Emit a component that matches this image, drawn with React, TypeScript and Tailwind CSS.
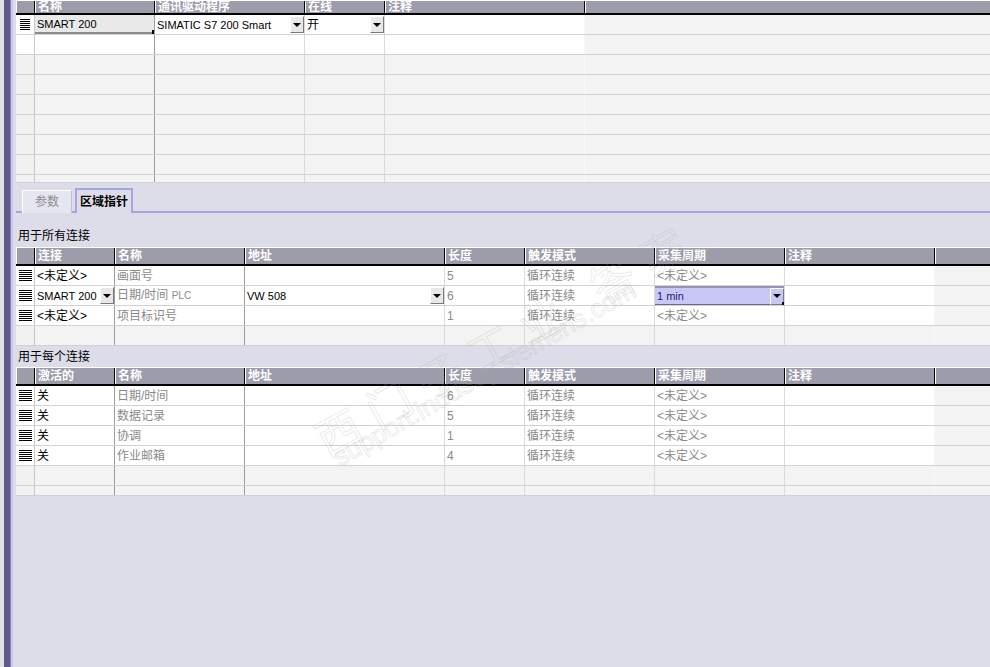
import React from 'react';

type Col = { w: string; title: string; line: string };

const font = "font-['Liberation_Sans','Noto_Sans_CJK_SC',sans-serif]";

function RowIcon({ w }: { w: string }) {
  return (
    <div className={`flex flex-col gap-px ${w}`}>
      {[0, 1, 2, 3, 4, 5].map((i) => (
        <div key={i} className="h-px bg-black" />
      ))}
    </div>
  );
}

function DropBtn({ lav }: { lav?: boolean }) {
  return (
    <div
      className={`w-[14px] h-[17px] shrink-0 flex items-center justify-center border-t border-l border-t-white border-l-white border-b border-r border-b-[#7a7a7a] border-r-[#7a7a7a] ${
        lav ? 'bg-[#c8c8f6]' : 'bg-[#e8e8e8]'
      }`}
    >
      <div className="w-0 h-0 border-l-[4px] border-r-[4px] border-t-[4px] border-l-transparent border-r-transparent border-t-black" />
    </div>
  );
}

function Header({ cols, h, iconW }: { cols: Col[]; h: string; iconW: string }) {
  return (
    <div className={`flex ${h} bg-[#9c9cab] border-t border-t-white border-b-2 border-b-black`}>
      <div className={`${iconW} shrink-0 border-l border-l-white border-r border-r-black`} />
      {cols.map((c) => (
        <div
          key={c.title}
          className={`${c.w} shrink-0 border-l border-l-white border-r border-r-black pl-[2px] text-white font-bold text-[12px] leading-[14px] flex items-center`}
        >
          {c.title}
        </div>
      ))}
      <div className="flex-1 border-l border-l-white" />
    </div>
  );
}

type Row = { cells: React.ReactNode[]; filled: boolean; noIcon?: boolean; h?: string };

function Grid({ cols, rows, iconW, icon }: { cols: Col[]; rows: Row[]; iconW: string; icon: string }) {
  return (
    <div>
      {rows.map((r, i) => (
        <div key={i} className={`flex ${r.h ?? 'h-[20px]'} border-b border-b-[#d2d2d2]`}>
          <div
            className={`${iconW} shrink-0 border-r border-r-[#c8c8c8] flex items-center justify-center ${
              r.filled ? 'bg-white' : 'bg-[#f1f1f1]'
            }`}
          >
            {r.filled && !r.noIcon && <RowIcon w={icon} />}
          </div>
          {cols.map((c, j) => (
            <div
              key={j}
              className={`${c.w} shrink-0 border-r ${c.line} ${r.filled ? 'bg-white' : 'bg-[#f3f3f3]'} flex items-center text-[12px] leading-[14px] overflow-hidden`}
            >
              {r.cells[j]}
            </div>
          ))}
          <div className="flex-1 bg-[#f3f3f3]" />
        </div>
      ))}
    </div>
  );
}

const Gray = ({ children }: { children: React.ReactNode }) => (
  <span className="pl-[2px] text-[#8a8a8a]">{children}</span>
);
const Black = ({ children }: { children: React.ReactNode }) => (
  <span className="pl-[2px] text-black">{children}</span>
);

const topCols: Col[] = [
  { w: 'w-[120px]', title: '名称', line: 'border-r-[#9c9c9c]' },
  { w: 'w-[150px]', title: '通讯驱动程序', line: 'border-r-[#dadada]' },
  { w: 'w-[80px]', title: '在线', line: 'border-r-[#dadada]' },
  { w: 'w-[200px]', title: '注释', line: 'border-r-[#f8f8f8]' },
];

function areaCols(first: string): Col[] {
  return [
    { w: 'w-[80px]', title: first, line: 'border-r-[#9c9c9c]' },
    { w: 'w-[130px]', title: '名称', line: 'border-r-[#9c9c9c]' },
    { w: 'w-[200px]', title: '地址', line: 'border-r-[#dadada]' },
    { w: 'w-[80px]', title: '长度', line: 'border-r-[#dadada]' },
    { w: 'w-[130px]', title: '触发模式', line: 'border-r-[#dadada]' },
    { w: 'w-[130px]', title: '采集周期', line: 'border-r-[#dadada]' },
    { w: 'w-[150px]', title: '注释', line: 'border-r-[#f8f8f8]' },
  ];
}

const empty = (n: number): Row[] => Array.from({ length: n }, () => ({ cells: [], filled: false }));

export default function App() {
  const topRows: Row[] = [
    {
      filled: true,
      cells: [
        <div className="relative w-full h-full bg-[#e9e9e9] border-b-2 border-b-[#8c8c8c] flex items-center pl-[2px] font-['Liberation_Sans',sans-serif] text-[11px]">
          SMART 200
          <div className="absolute right-[-2px] bottom-[-2px] w-[4px] h-[4px] bg-black" />
        </div>,
        <div className="w-full flex items-center justify-between pl-[2px] font-['Liberation_Sans',sans-serif] text-[11px]">
          SIMATIC S7 200 Smart
          <DropBtn />
        </div>,
        <div className="w-full flex items-center justify-between pl-[2px]">
          开
          <DropBtn />
        </div>,
        null,
      ],
    },
    { filled: true, noIcon: true, cells: [] },
    ...empty(6),
    { filled: false, cells: [], h: 'h-[8px]' },
  ];

  const allRows: Row[] = [
    {
      filled: true,
      cells: [<Black>&lt;未定义&gt;</Black>, <Gray>画面号</Gray>, null, <Gray>5</Gray>, <Gray>循环连续</Gray>, <Gray>&lt;未定义&gt;</Gray>],
    },
    {
      filled: true,
      cells: [
        <div className="w-full flex items-center justify-between pl-[2px] font-['Liberation_Sans',sans-serif] text-[11px]">
          SMART 200
          <DropBtn />
        </div>,
        <span className="pl-[2px] text-[#8a8a8a]">
          日期/时间 <span className="font-['Liberation_Sans',sans-serif] text-[10px]">PLC</span>
        </span>,
        <div className="w-full flex items-center justify-between pl-[2px] font-['Liberation_Sans',sans-serif] text-[11px]">
          VW 508
          <DropBtn />
        </div>,
        <Gray>6</Gray>,
        <Gray>循环连续</Gray>,
        <div className="relative w-full h-full bg-[#c8c8f6] border-t-2 border-t-[#9494b4] border-b border-b-[#6a6a8a] flex items-center justify-between pl-[2px] text-[#1c1c6a] font-['Liberation_Sans',sans-serif] text-[11px]">
          1 min
          <DropBtn lav />
          <div className="absolute right-[-2px] bottom-[-2px] w-[4px] h-[4px] bg-black" />
        </div>,
      ],
    },
    {
      filled: true,
      cells: [<Black>&lt;未定义&gt;</Black>, <Gray>项目标识号</Gray>, null, <Gray>1</Gray>, <Gray>循环连续</Gray>, <Gray>&lt;未定义&gt;</Gray>],
    },
    ...empty(1),
  ];

  const eachRows: Row[] = [
    ['日期/时间', '6'],
    ['数据记录', '5'],
    ['协调', '1'],
    ['作业邮箱', '4'],
  ].map(([n, l]) => ({
    filled: true,
    cells: [<Black>关</Black>, <Gray>{n}</Gray>, null, <Gray>{l}</Gray>, <Gray>循环连续</Gray>, <Gray>&lt;未定义&gt;</Gray>],
  }));
  eachRows.push({ filled: false, cells: [] }, { filled: false, cells: [], h: 'h-[10px]' });

  return (
    <div className={`relative flex w-[990px] h-[667px] overflow-hidden bg-[#dddde9] ${font}`}>
      <div className="w-[4px] bg-[#e2e2e6]" />
      <div className="w-[6px] bg-[#5d5a8b]" />
      <div className="w-[1px] bg-[#8c89c2]" />
      <div className="w-[2px] bg-[#c6c6f2]" />
      <div className="w-[3px] bg-[#dddde9]" />

      <div className="flex-1 flex flex-col">
        <Header cols={topCols} h="h-[15px]" iconW="w-[19px]" />
        <Grid cols={topCols} rows={topRows} iconW="w-[19px]" icon="w-[10px]" />

        <div className="h-[30px] flex items-end border-b-2 border-b-[#a6a6de]">
          <div className="ml-[6px] mb-[-2px] w-[50px] h-[23px] bg-[#e6e6f0] border-t border-l border-t-white border-l-white border-r border-r-[#c0c0d0] flex items-center justify-center text-[12px] text-[#8c8c8c]">
            参数
          </div>
          <div className="ml-[3px] mb-[-2px] w-[58px] h-[25px] bg-[#dddde9] border-t-2 border-l-2 border-r-2 border-[#a6a6de] flex items-center justify-center text-[12px] font-bold text-black">
            区域指针
          </div>
        </div>

        <div className="h-[34px] flex items-end pb-[4px] pl-[2px] text-[12px] leading-[14px] text-black">用于所有连接</div>
        <Header cols={areaCols('连接')} h="h-[19px]" iconW="w-[19px]" />
        <Grid cols={areaCols('连接')} rows={allRows} iconW="w-[19px]" icon="w-[13px]" />

        <div className="h-[21px] flex items-end pb-[3px] pl-[2px] text-[12px] leading-[14px] text-black">用于每个连接</div>
        <Header cols={areaCols('激活的')} h="h-[19px]" iconW="w-[19px]" />
        <Grid cols={areaCols('激活的')} rows={eachRows} iconW="w-[19px]" icon="w-[13px]" />
      </div>

      {/* faint site watermark over the grid */}
      <div className="pointer-events-none absolute left-[318px] top-[408px] origin-left rotate-[-29deg] whitespace-nowrap text-[44px] tracking-[14px] font-['Noto_Sans_CJK_SC',sans-serif] text-transparent [-webkit-text-stroke:1px_rgba(170,170,170,0.25)]">
        西门子工业 答案
      </div>
      <div className="pointer-events-none absolute left-[336px] top-[440px] origin-left rotate-[-30deg] whitespace-nowrap text-[26px] font-['Liberation_Sans',sans-serif] text-transparent [-webkit-text-stroke:1px_rgba(170,170,170,0.25)]">
        support.industry.siemens.com
      </div>
    </div>
  );
}
